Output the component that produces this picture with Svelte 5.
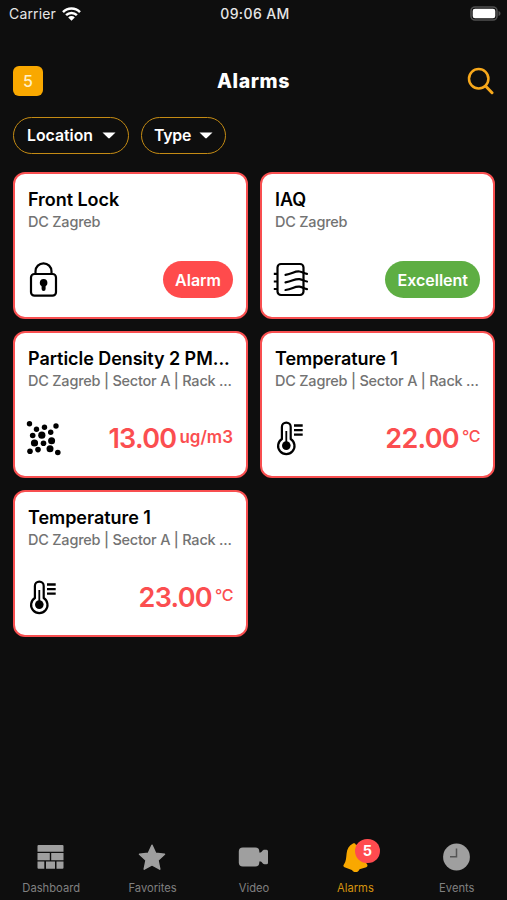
<script lang="ts">
  interface Alarm {
    name: string;
    path: string;
    icon: 'lock' | 'air' | 'particles' | 'thermometer';
    status?: string;
    ok?: boolean;
    value?: string;
    unit?: string;
  }

  const alarms: Alarm[] = [
    { name: 'Front Lock', path: 'DC Zagreb', icon: 'lock', status: 'Alarm' },
    { name: 'IAQ', path: 'DC Zagreb', icon: 'air', status: 'Excellent', ok: true },
    { name: 'Particle Density 2 PM...', path: 'DC Zagreb | Sector A | Rack ...', icon: 'particles', value: '13.00', unit: 'ug/m3' },
    { name: 'Temperature 1', path: 'DC Zagreb | Sector A | Rack ...', icon: 'thermometer', value: '22.00', unit: '°C' },
    { name: 'Temperature 1', path: 'DC Zagreb | Sector A | Rack ...', icon: 'thermometer', value: '23.00', unit: '°C' },
  ];

  const tabs = ['Dashboard', 'Favorites', 'Video', 'Alarms', 'Events'];
  const filters = ['Location', 'Type'];

  // cx, cy, r
  const particles = [
    [3.5, 3.7, 2.7], [30, 6, 2.7], [10.5, 9.3, 2.7], [18.5, 7.3, 2.7], [24.7, 12.2, 2.7],
    [6.7, 15.5, 2.8], [15.8, 15.2, 3.6], [25.6, 20.7, 3.5], [8.5, 23, 3.6], [17.5, 23.3, 2.8],
    [24, 28.7, 3.5], [12, 29.6, 2.8], [4, 31.2, 2.8], [31.8, 32.5, 2.8],
  ];

  let activeTab = $state('Alarms');
</script>

<div class="screen">
  <div class="status-bar">
    <div class="carrier">
      Carrier
      <svg width="19" height="14" viewBox="0 0 19 14">
        <g fill="none" stroke="#fff" stroke-width="2.5">
          <path d="M1 5.1a12 12 0 0 1 17 0" />
          <path d="M4.1 8.2a7.6 7.6 0 0 1 10.8 0" />
        </g>
        <path d="M9.5 13.8 6.2 10.4a4.7 4.7 0 0 1 6.6 0z" fill="#fff" />
      </svg>
    </div>
    <div class="time">09:06 AM</div>
    <svg class="battery" width="31" height="15" viewBox="0 0 31 15">
      <rect x="1" y="1" width="26" height="13" rx="4" fill="none" stroke="#505050" stroke-width="1.6" />
      <rect x="2.7" y="2.7" width="22.6" height="9.6" rx="2.3" fill="#fff" />
      <path d="M28.5 5c1.6.7 2 1.5 2 2.5s-.4 1.8-2 2.5z" fill="#505050" />
    </svg>
  </div>

  <header>
    <span class="count">{alarms.length}</span>
    <h1>Alarms</h1>
    <button class="search" aria-label="Search">
      <svg width="27" height="28" viewBox="0 0 27 28" fill="none" stroke="#f7a81b">
        <circle cx="11.7" cy="11.7" r="9.7" stroke-width="2.5" />
        <path d="M18.5 19l6.5 6.7" stroke-width="3" stroke-linecap="round" />
      </svg>
    </button>
  </header>

  <div class="filters">
    {#each filters as filter}
      <button class="filter">
        {filter}
        <svg width="14" height="7" viewBox="0 0 14 7"><path d="M.5.4h13L7.8 6.1q-.8.7-1.6 0z" fill="#fff" /></svg>
      </button>
    {/each}
  </div>

  <main>
    {#each alarms as alarm}
      <div class="card">
        <h2>{alarm.name}</h2>
        <p>{alarm.path}</p>
        <div class="card-bottom">
          <svg class="icon" width="36" height="36" viewBox="0 0 36 36" fill="none" stroke="#000" stroke-width="2.2">
            {#if alarm.icon === 'lock'}
              <rect x="5" y="13" width="25" height="21.7" rx="3.5" />
              <path d="M9.5 13v-2.7a8 8 0 0 1 16 0V13" />
              <circle cx="17.6" cy="21.8" r="3.8" fill="#000" stroke="none" />
              <path d="M15.6 23h4v5a2 2 0 0 1-4 0z" fill="#000" stroke="none" />
            {:else if alarm.icon === 'air'}
              <path d="M30.5 10V6.500A3.500 3.500 0 0 0 27 3H8a3.500 3.500 0 0 0-3.500 3.500v24A3.500 3.500 0 0 0 8 34h19a3.500 3.500 0 0 0 3.500-3.500V10" />
              <path d="M.8 12.8h3.7M.8 20.5h3.7M.8 28h3.7" />
              <path d="M12.5 13.8c7.5-1 8.5-3.800 14-3.300 3.500.4 4.500 2 7.500 2.400M12.500 21.400c7.500-1 8.500-3.800 14-3.300 3.500.4 4.500 2 7.500 2.400M12.500 29c7.500-1 8.500-3.800 14-3.300 3.500.4 4.500 2 7.500 2.400" stroke-linecap="round" />
            {:else if alarm.icon === 'particles'}
              {#each particles as [cx, cy, r]}
                <circle {cx} {cy} {r} fill="#000" stroke="none" />
              {/each}
            {:else}
              <path d="M8.9 19V7a4.4 4.4 0 0 1 8.8 0v12a8.2 8.2 0 1 1-8.8 0z" stroke-width="2.2" />
              <path d="M13.3 11v15" stroke-width="1.8" />
              <circle cx="13.3" cy="25.6" r="4.3" fill="#000" stroke="none" />
              <path d="M21 5.5h8.7M21 10.1h8.7M21 14.7h8.7" stroke-width="2.3" />
            {/if}
          </svg>
          {#if alarm.status}
            <span class="pill" class:ok={alarm.ok}>{alarm.status}</span>
          {:else}
            <div class="reading">
              <span class="value">{alarm.value}</span>
              <span class="unit" class:degree={alarm.unit === '°C'}>{alarm.unit}</span>
            </div>
          {/if}
        </div>
      </div>
    {/each}
  </main>

  <nav>
    {#each tabs as tab}
      <button class="tab" class:active={tab === activeTab} onclick={() => activeTab = tab}>
        <span class="tab-icon">
          <svg width="30" height="30" viewBox="0 0 30 30" fill="currentColor">
            {#if tab === 'Dashboard'}
              <path d="M2.5 3h24a1 1 0 0 1 1 1v5.8h-26V4a1 1 0 0 1 1-1zM1.5 11h12.3v7.2H1.5zM15.2 11h12.3v7.2H15.2zM1.5 19.4h6.8v7.4H2.5a1 1 0 0 1-1-1zM10 19.4h9v7.4h-9zM20.5 19.4h7v6.4a1 1 0 0 1-1 1h-6z" />
            {:else if tab === 'Favorites'}
              <path d="M15 3.3l3.7 8 8.8 1-6.5 6 1.8 8.9-7.800-4.400-7.800 4.400L9 18.300l-6.500-6 8.800-1z" stroke="currentColor" stroke-width="1.5" stroke-linejoin="round" />
            {:else if tab === 'Video'}
              <rect x=".8" y="5.5" width="20.5" height="19" rx="4" />
              <path d="M20.5 10.5h2c1.500 0 1.800-2.700 4-2.700h2q1.500 0 1.500 1.500v11.400q0 1.500-1.500 1.500h-2c-2.200 0-2.500-2.700-4-2.700h-2z" />
            {:else if tab === 'Alarms'}
              <path d="M13 1.5c1.2-.5 2.3 0 2.8 1.2 6 .8 8 4.6 8 10.3 0 4 1.2 6.5 3.4 9.5.8 1.700-.3 2.700-1.700 3l-6 1.700c-1.300 3.700-5.800 4-7.600.7l-7.400-2.700c-1.300-.5-1.500-1.600-.6-2.700C6.200 19.500 6.200 15 6.600 11.500 7.100 7 9 3.500 13 1.500z" />
            {:else}
              <circle cx="15.5" cy="15" r="13.4" />
              <path d="M15.5 6.5v8.3H9" fill="none" stroke="#555" stroke-width="1.5" />
            {/if}
          </svg>
          {#if tab === 'Alarms'}
            <span class="badge">{alarms.length}</span>
          {/if}
        </span>
        <span class="label">{tab}</span>
      </button>
    {/each}
  </nav>
</div>

<style>
  :global(body) {
    background: #0e0e0e;
  }

  .screen {
    height: 900px;
    box-sizing: border-box;
    display: flex;
    flex-direction: column;
    overflow: hidden;
    background: #0e0e0e;
    color: #fff;
    font-family: Inter, "Liberation Sans", sans-serif;
  }

  button {
    padding: 0;
    border: none;
    background: none;
    color: inherit;
    font-family: inherit;
    cursor: pointer;
  }

  .status-bar {
    display: grid;
    grid-template-columns: 1fr auto 1fr;
    align-items: center;
    height: 27px;
    padding: 0 6px 0 9px;
    font-size: 14px;
    color: #e6e6e6;
  }

  .carrier {
    display: flex;
    align-items: center;
    gap: 6px;
    letter-spacing: 0.15px;
  }

  .time {
    font-weight: 500;
    letter-spacing: 0.4px;
  }

  .battery {
    justify-self: end;
  }

  header {
    display: grid;
    grid-template-columns: 1fr auto 1fr;
    align-items: center;
    height: 90px;
    padding: 17px 13px 0;
    box-sizing: border-box;
  }

  .count {
    width: 30px;
    height: 30px;
    line-height: 31px;
    border-radius: 6px;
    background: #f9a800;
    color: #fff0c8;
    font-size: 16px;
    font-weight: 500;
    text-align: center;
  }

  h1 {
    margin: 0;
    font-size: 19.5px;
    font-weight: 800;
    letter-spacing: 0.6px;
  }

  .search {
    justify-self: end;
    height: 28px;
  }

  .filters {
    display: flex;
    gap: 12px;
    padding: 0 13px;
  }

  .filter {
    display: flex;
    align-items: center;
    gap: 9px;
    height: 37px;
    padding: 0 12px 0 13px;
    border: 1px solid #c48b14;
    border-radius: 19px;
    font-size: 15.8px;
    font-weight: 600;
  }

  .filter:last-child {
    gap: 8px;
    padding: 0 12px;
    letter-spacing: -0.2px;
  }

  main {
    flex: 1;
    display: grid;
    grid-template-columns: 1fr 1fr;
    grid-auto-rows: 147px;
    gap: 12px;
    align-content: start;
    padding: 18px 12px 0 13px;
  }

  .card {
    box-sizing: border-box;
    min-width: 0;
    display: flex;
    flex-direction: column;
    padding: 15px 13px 19px;
    border: 2px solid #f84f50;
    border-radius: 12px;
    background: #fff;
    color: #000;
  }

  h2 {
    margin: 0;
    line-height: 22px;
    font-size: 18px;
    font-weight: 600;
    letter-spacing: -0.05px;
    white-space: nowrap;
  }

  p {
    margin: 0;
    line-height: 22px;
    font-size: 14.5px;
    font-weight: 500;
    letter-spacing: -0.22px;
    color: #737373;
    white-space: nowrap;
  }

  .card-bottom {
    flex: 1;
    display: flex;
    align-items: flex-end;
    justify-content: space-between;
  }

  .icon {
    margin: 0 0 1px -2px;
    overflow: visible;
  }

  .pill {
    height: 37px;
    line-height: 38px;
    padding: 0 12px;
    border-radius: 19px;
    background: #ff4b4c;
    color: #fff;
    font-size: 16px;
    font-weight: 600;
  }

  .pill.ok {
    background: #5eae43;
  }

  .reading {
    display: flex;
    align-items: flex-start;
    gap: 3px;
    height: 36px;
    color: #fb4e50;
  }

  .value {
    line-height: 36px;
    font-size: 27px;
    font-weight: 600;
    letter-spacing: -0.7px;
  }

  .unit {
    line-height: 32px;
    font-size: 17px;
    font-weight: 600;
  }

  .unit.degree {
    line-height: 31px;
    font-size: 16px;
    font-weight: 500;
    letter-spacing: -0.4px;
  }

  nav {
    display: grid;
    grid-template-columns: repeat(5, 1fr);
    height: 61px;
  }

  .tab {
    display: flex;
    flex-direction: column;
    align-items: center;
    gap: 8px;
    padding-top: 3px;
    color: #9f9f9f;
  }

  .tab-icon {
    position: relative;
    height: 30px;
  }

  .label {
    padding-left: 1px;
    font-size: 11.2px;
    line-height: 16px;
    color: #808080;
  }

  .tab.active {
    color: #f9a800;
  }

  .tab.active .label {
    color: #d5930f;
  }

  .badge {
    position: absolute;
    left: 15px;
    top: -3px;
    width: 25px;
    height: 24px;
    line-height: 24px;
    border-radius: 12px;
    background: #ff4b4f;
    color: #fff;
    font-size: 14.5px;
    font-weight: 700;
    text-align: center;
  }
</style>
